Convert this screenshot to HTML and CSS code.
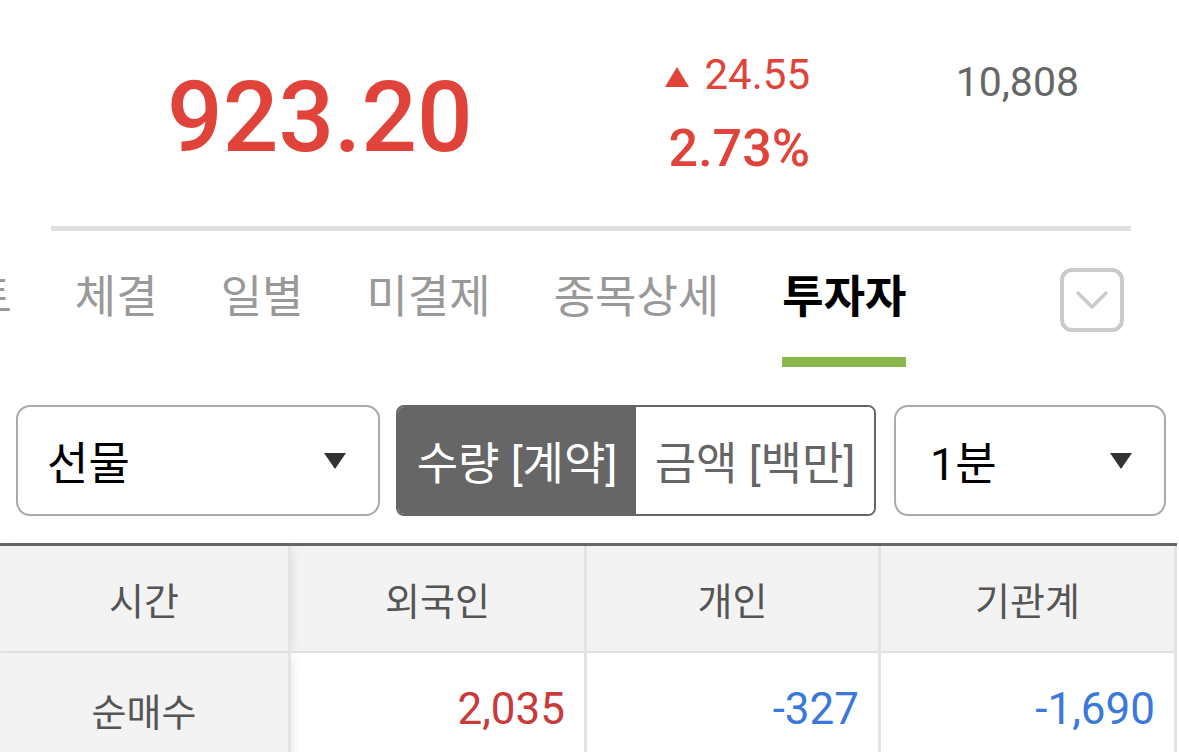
FILE: index.html
```html
<!DOCTYPE html>
<html lang="ko">
<head>
  <meta charset="UTF-8" />
  <meta name="viewport" content="width=device-width, initial-scale=1.0" />
  <title>투자자 동향</title>
  <link rel="stylesheet" href="styles.css">
</head>
<body>
  <div class="quote">
    <div class="price">923.20</div>
    <div class="change">
      <div class="change-amount">
        <svg class="up-arrow" width="24" height="20" viewBox="0 0 24 20"><polygon points="12,0 24,20 0,20" fill="#e0433a"/></svg>24.55
      </div>
      <div class="change-rate">2.73%</div>
    </div>
    <div class="volume">10,808</div>
  </div>
  <div class="divider"></div>

  <div class="tabbar">
    <div class="tabs">
      <div class="tab">차트</div>
      <div class="tab">체결</div>
      <div class="tab">일별</div>
      <div class="tab">미결제</div>
      <div class="tab">종목상세</div>
      <div class="tab active">투자자</div>
    </div>
    <button class="tab-toggle">
      <svg width="34" height="20" viewBox="0 0 34 20"><polyline points="3,3 17,17 31,3" fill="none" stroke="#cacaca" stroke-width="3.5" stroke-linecap="round" stroke-linejoin="round"/></svg>
    </button>
  </div>

  <div class="controls">
    <div class="select select-market">
      <span>선물</span>
      <span class="caret"></span>
    </div>
    <div class="segment">
      <div class="segment-item selected">수량 [계약]</div>
      <div class="segment-item">금액 [백만]</div>
    </div>
    <div class="select select-period">
      <span>1분</span>
      <span class="caret"></span>
    </div>
  </div>

  <div class="table">
    <div class="cell head first">시간</div>
    <div class="cell head">외국인</div>
    <div class="cell head">개인</div>
    <div class="cell head">기관계</div>

    <div class="cell label first">순매수</div>
    <div class="cell num up">2,035</div>
    <div class="cell num down">-327</div>
    <div class="cell num down">-1,690</div>
  </div>
</body>
</html>
```

FILE: styles.css
```css
body {
  margin: 0;
  background-color: #ffffff;
  font-family: Roboto, "Noto Sans CJK KR", sans-serif;
  width: 1179px;
  height: 752px;
  overflow: hidden;
}
.quote {
  display: flex;
  align-items: flex-start;
  height: 226px;
}
.price {
  width: 474px;
  padding-left: 167px;
  margin-top: 69px;
  font-size: 98px;
  font-weight: 500;
  line-height: 1;
  color: #e0433a;
}
.change {
  width: 169px;
  margin-top: 54px;
  text-align: right;
  color: #e0433a;
  line-height: 1;
}
.change-amount {
  font-size: 42px;
  display: flex;
  align-items: center;
  justify-content: flex-end;
}
.up-arrow {
  margin-right: 16px;
  margin-top: 4px;
}
.change-rate {
  margin-top: 27px;
  font-size: 52px;
  font-weight: 500;
}
.volume {
  width: 269px;
  margin-top: 62px;
  text-align: right;
  font-size: 41px;
  line-height: 1;
  color: #666666;
}
.divider {
  height: 5px;
  margin: 0 48px 0 51px;
  background-color: #e0e0e0;
}
.tabbar {
  display: flex;
  align-items: flex-start;
}
.tabs {
  flex: 1;
  display: flex;
  gap: 63px;
  overflow: hidden;
  margin-left: -71px;
}
.tab {
  flex: none;
  margin-top: 37px;
  padding-bottom: 29px;
  border-bottom: 10px solid transparent;
  font-size: 45px;
  line-height: 60px;
  color: #999999;
  white-space: nowrap;
}
.tab.active {
  color: #000000;
  font-weight: 700;
  border-bottom-color: #8bb84c;
}
.tab-toggle {
  flex: none;
  width: 64px;
  height: 64px;
  margin: 37px 55px 0 60px;
  padding: 0;
  border: 4px solid #cacaca;
  border-radius: 12px;
  background-color: #ffffff;
  display: flex;
  align-items: center;
  justify-content: center;
}
.controls {
  display: flex;
  gap: 16px;
  margin-top: 38px;
  padding-left: 16px;
  height: 111px;
}
.select {
  box-sizing: border-box;
  height: 111px;
  border: 2px solid #aaaaaa;
  border-radius: 14px;
  display: flex;
  align-items: center;
  justify-content: space-between;
  padding: 0 32px 0 29px;
  font-size: 45px;
  color: #000000;
}
.select-market {
  width: 364px;
}
.select-period {
  width: 272px;
  margin-left: 2px;
  padding-left: 34px;
}
.caret {
  width: 0;
  height: 0;
  border-left: 11px solid transparent;
  border-right: 11px solid transparent;
  border-top: 16px solid #333333;
}
.segment {
  box-sizing: border-box;
  width: 480px;
  height: 111px;
  border: 2px solid #666666;
  border-radius: 8px;
  overflow: hidden;
  display: flex;
}
.segment-item {
  flex: 1;
  display: flex;
  align-items: center;
  justify-content: center;
  font-size: 45px;
  color: #666666;
  background-color: #ffffff;
  white-space: nowrap;
}
.segment-item.selected {
  background-color: #666666;
  color: #ffffff;
}
.table {
  margin-top: 27px;
  width: 1177px;
  border-top: 3px solid #666666;
  display: grid;
  grid-template-columns: 291px 296px 294px 296px;
  grid-template-rows: 107px 112px;
}
.cell {
  border-right: 3px solid #e4e4e4;
  display: flex;
  align-items: center;
  font-size: 38px;
  color: #555555;
}
.cell.head {
  justify-content: center;
  background-color: #f3f3f3;
  border-bottom: 2px solid #e2e2e2;
}
.cell.first {
  position: relative;
  z-index: 1;
  box-shadow: 5px 0 8px -3px rgba(0, 0, 0, 0.08);
}
.cell.label {
  justify-content: center;
  background-color: #f3f3f3;
}
.cell.num {
  justify-content: flex-end;
  padding-right: 19px;
  font-size: 44px;
  background-color: #ffffff;
}
.cell.up {
  color: #c83b3b;
}
.cell.down {
  color: #3a78dc;
}
```
